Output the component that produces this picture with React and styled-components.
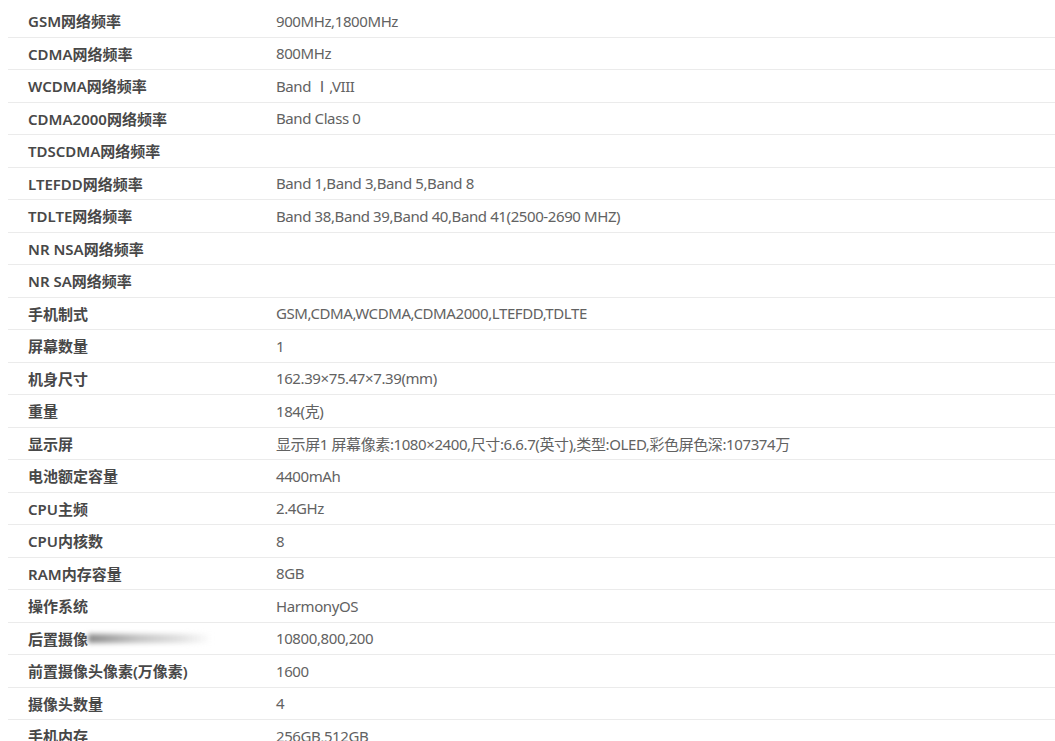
import React from 'react'
import styled, { createGlobalStyle } from 'styled-components'

const GlobalStyle = createGlobalStyle`
  html, body {
    margin: 0;
    padding: 0;
    background: #fff;
    overflow: hidden;
  }
  body {
    font-family: "Noto Sans", "Noto Sans CJK SC", sans-serif;
  }
`

const specs = [
  ['GSM网络频率', '900MHz,1800MHz'],
  ['CDMA网络频率', '800MHz'],
  ['WCDMA网络频率', 'Band Ⅰ,VIII'],
  ['CDMA2000网络频率', 'Band Class 0'],
  ['TDSCDMA网络频率', ''],
  ['LTEFDD网络频率', 'Band 1,Band 3,Band 5,Band 8'],
  ['TDLTE网络频率', 'Band 38,Band 39,Band 40,Band 41(2500-2690 MHZ)'],
  ['NR NSA网络频率', ''],
  ['NR SA网络频率', ''],
  ['手机制式', 'GSM,CDMA,WCDMA,CDMA2000,LTEFDD,TDLTE'],
  ['屏幕数量', '1'],
  ['机身尺寸', '162.39×75.47×7.39(mm)'],
  ['重量', '184(克)'],
  ['显示屏', '显示屏1 屏幕像素:1080×2400,尺寸:6.6.7(英寸),类型:OLED,彩色屏色深:107374万'],
  ['电池额定容量', '4400mAh'],
  ['CPU主频', '2.4GHz'],
  ['CPU内核数', '8'],
  ['RAM内存容量', '8GB'],
  ['操作系统', 'HarmonyOS'],
  ['后置摄像', '10800,800,200', true],
  ['前置摄像头像素(万像素)', '1600'],
  ['摄像头数量', '4'],
  ['手机内存', '256GB,512GB'],
]

const App = () => {
  return (
    <React.Fragment>
      <GlobalStyle />
      <SpecTable>
        {specs.map(([label, value, smudge]) => (
          <Row key={label}>
            <Label>
              {label}
              {smudge && <Smudge />}
            </Label>
            <Value>{value}</Value>
          </Row>
        ))}
      </SpecTable>
    </React.Fragment>
  )
}

export default App

const SpecTable = styled.div`
  margin: 5px 0 0 8px;
  display: flex;
  flex-direction: column;
`

const Row = styled.div`
  display: grid;
  grid-template-columns: 248px 1fr;
  height: 32.5px;
  align-items: center;
  border-bottom: 1px solid #ebebeb;
  box-sizing: border-box;
  font-size: 15px;
`

const Label = styled.div`
  position: relative;
  padding-left: 20px;
  color: #484848;
  font-weight: 600;
  white-space: nowrap;
`

const Smudge = styled.span`
  position: absolute;
  left: 80px;
  top: 50%;
  width: 124px;
  height: 9px;
  margin-top: -4px;
  background: linear-gradient(90deg, #8a8a8a 0%, #c4c4c4 40%, #e2e2e2 75%, rgba(255,255,255,0) 100%);
  filter: blur(2.5px);
`

const Value = styled.div`
  padding-left: 20px;
  color: #626262;
  white-space: nowrap;
  letter-spacing: -0.4px;
`
